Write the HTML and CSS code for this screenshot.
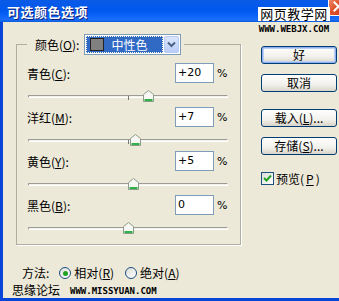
FILE: index.html
```html
<!DOCTYPE html>
<html lang="zh-CN">
<head>
  <meta charset="UTF-8" />
  <title>可选颜色选项</title>
  <link rel="stylesheet" href="styles.css">
</head>
<body>
  <div class="window">
    <div class="titlebar">
      <span class="title">可选颜色选项</span>
      <span class="close">
        <svg width="21" height="21" viewBox="0 0 21 21"><path d="M6 6 L15 15 M15 6 L6 15" stroke="#fff" stroke-width="2.2" stroke-linecap="square"/></svg>
      </span>
    </div>
    <div class="mark-top">
      <span class="mark-cn">网页教学网</span>
      <span class="mark-url">WWW.WEBJX.COM</span>
    </div>

    <div class="client">
      <div class="main">
        <fieldset class="group">
          <legend class="group-head">
            <span class="label">颜色(<u>O</u>):</span>
            <div class="combo">
              <div class="combo-sel"><span class="swatch"></span>中性色</div>
              <div class="combo-btn">
                <svg width="9" height="7" viewBox="0 0 9 7"><path d="M1 1.5 L4.5 5 L8 1.5" fill="none" stroke="#4d6185" stroke-width="2"/></svg>
              </div>
            </div>
          </legend>

          <div class="channel">
            <div class="field-row"><span class="label">青色(<u>C</u>):</span><span class="num">+20</span><span class="pct">%</span></div>
            <div class="slider"><div class="track"></div><span class="tick"></span>
              <svg class="thumb" style="left:115px" width="11" height="12" viewBox="0 0 11 12"><path d="M0.5 4.5 L5.5 0.5 L10.5 4.5 V11.5 H0.5 Z" fill="#f7f7f4" stroke="#8c9c8c"/><path d="M1.5 10 H9.5" stroke="#2fb245" stroke-width="2"/></svg>
            </div>
          </div>

          <div class="channel">
            <div class="field-row"><span class="label">洋红(<u>M</u>):</span><span class="num">+7</span><span class="pct">%</span></div>
            <div class="slider"><div class="track"></div><span class="tick"></span>
              <svg class="thumb" style="left:102px" width="11" height="12" viewBox="0 0 11 12"><path d="M0.5 4.5 L5.5 0.5 L10.5 4.5 V11.5 H0.5 Z" fill="#f7f7f4" stroke="#8c9c8c"/><path d="M1.5 10 H9.5" stroke="#2fb245" stroke-width="2"/></svg>
            </div>
          </div>

          <div class="channel">
            <div class="field-row"><span class="label">黄色(<u>Y</u>):</span><span class="num">+5</span><span class="pct">%</span></div>
            <div class="slider"><div class="track"></div><span class="tick"></span>
              <svg class="thumb" style="left:100px" width="11" height="12" viewBox="0 0 11 12"><path d="M0.5 4.5 L5.5 0.5 L10.5 4.5 V11.5 H0.5 Z" fill="#f7f7f4" stroke="#8c9c8c"/><path d="M1.5 10 H9.5" stroke="#2fb245" stroke-width="2"/></svg>
            </div>
          </div>

          <div class="channel">
            <div class="field-row"><span class="label">黑色(<u>B</u>):</span><span class="num">0</span><span class="pct">%</span></div>
            <div class="slider"><div class="track"></div><span class="tick"></span>
              <svg class="thumb" style="left:95px" width="11" height="12" viewBox="0 0 11 12"><path d="M0.5 4.5 L5.5 0.5 L10.5 4.5 V11.5 H0.5 Z" fill="#f7f7f4" stroke="#8c9c8c"/><path d="M1.5 10 H9.5" stroke="#2fb245" stroke-width="2"/></svg>
            </div>
          </div>
        </fieldset>

        <div class="buttons">
          <div class="btn default">好</div>
          <div class="btn">取消</div>
          <div class="btn gap">载入(<u>L</u>)...</div>
          <div class="btn">存储(<u>S</u>)...</div>
          <label class="check">
            <span class="check-box">
              <svg width="9" height="9" viewBox="0 0 9 9"><path d="M1 4 L3.5 6.5 L8 1.5" fill="none" stroke="#21a121" stroke-width="2"/></svg>
            </span>预览(<u>P</u>)
          </label>
        </div>
      </div>

      <div class="method">
        <span class="method-label">方法:</span>
        <span class="radio on"><span class="dot"></span></span><span class="radio-text">相对(<u>R</u>)</span>
        <span class="radio"></span><span class="radio-text">绝对(<u>A</u>)</span>
      </div>

      <div class="footer-mark">
        <span class="mark-forum">思缘论坛</span>
        <span class="mark-url">WWW.MISSYUAN.COM</span>
      </div>
    </div>
  </div>
</body>
</html>
```

FILE: styles.css
```css
* {
  box-sizing: border-box;
}
body {
  margin: 0;
  font-family: "Noto Sans CJK SC", "Liberation Sans", sans-serif;
  font-size: 12px;
  color: #000;
  background: #ece9d8;
}
u {
  text-decoration: underline;
  text-underline-offset: 1px;
}
.window {
  position: relative;
  width: 339px;
  height: 301px;
  overflow: hidden;
  background: #0846d8;
  display: flex;
  flex-direction: column;
}
.titlebar {
  height: 22px;
  display: flex;
  align-items: center;
  padding-left: 7px;
  background: linear-gradient(to bottom, #0a5ae6 0%, #0058ee 45%, #0a62f6 70%, #1a6ef8 90%, #0c5ad8 100%);
}
.title {
  color: #fff;
  font-weight: bold;
  font-size: 13px;
  letter-spacing: 0.5px;
  text-shadow: 1px 1px 0 #0a1f7a;
}
.close {
  margin-left: auto;
  margin-right: -10px;
  align-self: flex-start;
  margin-top: -5px;
  width: 21px;
  height: 21px;
  border: 1px solid #fff;
  border-radius: 3px;
  background: linear-gradient(135deg, #f19a7c, #e0532c 45%, #c8391a);
  display: flex;
}
.mark-top {
  position: absolute;
  left: 258px;
  top: 7px;
  width: 72px;
  display: flex;
  flex-direction: column;
  align-items: center;
}
.mark-cn {
  font-size: 13px;
  line-height: 14px;
  color: #000;
  background: #fff;
  padding: 0 2px;
  letter-spacing: 0.5px;
}
.mark-url {
  font-family: "DejaVu Sans Mono", monospace;
  font-weight: bold;
  font-size: 9px;
  line-height: 9px;
  color: #000;
  margin-top: 4px;
}
.client {
  flex: 1;
  margin: 0 0 3px 3px;
  background: #ece9d8;
  display: flex;
  flex-direction: column;
}
.main {
  display: flex;
  padding-top: 12px;
}
.group {
  margin: 0 0 0 13px;
  width: 225px;
  min-width: 0;
  padding: 8px 12px 5px 10px;
  border: 1px solid #b0ae9f;
  box-shadow: 1px 1px 0 #fff;
}
.group-head {
  display: flex;
  align-items: center;
  gap: 5px;
  padding: 0 3px 0 8px;
  background: #ece9d8;
}
.label {
  white-space: nowrap;
}
.combo {
  width: 97px;
  height: 21px;
  border: 1px solid #7f9db9;
  background: #fff;
  display: flex;
  padding: 1px;
}
.combo-sel {
  flex: 1;
  display: flex;
  align-items: center;
  gap: 7px;
  padding-left: 4px;
  background: #316ac5;
  color: #fff;
  outline: 1px dotted #ffd;
  outline-offset: -1px;
}
.swatch {
  width: 14px;
  height: 13px;
  background: #808080;
  border: 1px solid #222;
}
.combo-btn {
  width: 15px;
  margin-left: 1px;
  border-radius: 2px;
  background: linear-gradient(#dbe6fd, #b9cdf8);
  border: 1px solid #b8cbf3;
  display: flex;
  align-items: center;
  justify-content: center;
}
.field-row {
  display: flex;
  align-items: center;
  height: 20px;
}
.field-row .label {
  flex: 1;
}
.num {
  width: 39px;
  height: 20px;
  border: 1px solid #7f9db9;
  background: #fff;
  padding-left: 2px;
  line-height: 18px;
  font-family: "DejaVu Sans", sans-serif;
  font-size: 11px;
}
.pct {
  width: 11px;
  margin-left: 3px;
  font-family: "DejaVu Sans", sans-serif;
  font-size: 11px;
}
.slider {
  position: relative;
  width: 200px;
  height: 12px;
  margin: 7px 0 5px 1px;
}
.track {
  position: absolute;
  left: 0;
  right: 0;
  top: 5px;
  height: 3px;
  border: 1px solid;
  border-color: #9d9c99 #fff #fff #9d9c99;
  border-radius: 1px;
  background: #f2f1ea;
}
.tick {
  position: absolute;
  left: 100px;
  top: 6px;
  width: 1px;
  height: 4px;
  background: #777;
}
.thumb {
  position: absolute;
  top: 0;
}
.buttons {
  margin-left: 20px;
  margin-top: 12px;
  width: 76px;
  display: flex;
  flex-direction: column;
}
.btn {
  height: 18px;
  margin-bottom: 10px;
  border: 1px solid #003c74;
  border-radius: 3px;
  background: linear-gradient(#fefefd, #f2f1ec 60%, #d8d4c8);
  display: flex;
  align-items: center;
  justify-content: center;
  line-height: 1;
}
.btn.default {
  box-shadow: inset 0 0 0 1px #8fb0ee, inset 0 0 0 2px #bcd0f5;
}
.btn.gap {
  margin-top: 7px;
}
.check {
  display: flex;
  align-items: center;
  gap: 2px;
  margin-top: 5px;
}
.check-box {
  width: 13px;
  height: 13px;
  border: 1px solid #1c5180;
  background: linear-gradient(135deg, #dcdcd7, #fff);
  display: flex;
  align-items: center;
  justify-content: center;
}
.method {
  display: flex;
  align-items: center;
  height: 14px;
  line-height: 14px;
  margin-top: 21px;
  padding-left: 19px;
}
.method-label {
  margin-right: 10px;
}
.radio {
  width: 12px;
  height: 12px;
  border: 1px solid #1c5180;
  border-radius: 50%;
  background: linear-gradient(135deg, #dcdcd7, #fff);
  display: flex;
  align-items: center;
  justify-content: center;
}
.radio .dot {
  width: 5px;
  height: 5px;
  border-radius: 50%;
  background: #21a121;
}
.radio-text {
  margin-left: 3px;
  margin-right: 11px;
}
.footer-mark {
  display: flex;
  align-items: center;
  height: 14px;
  line-height: 14px;
  margin-top: 3px;
  padding-left: 9px;
}
.mark-forum {
  font-size: 12px;
  margin-right: 10px;
}
.footer-mark .mark-url {
  margin-top: 2px;
}
```
